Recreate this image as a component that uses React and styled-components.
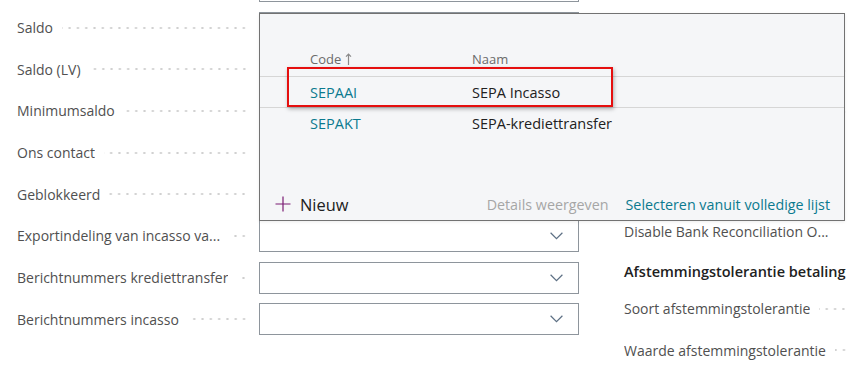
import React from 'react';
import styled, { createGlobalStyle } from 'styled-components';

const GlobalStyle = createGlobalStyle`
  body {
    margin: 0;
    background: #ffffff;
    font-family: "Segoe UI", "Open Sans", "Noto Sans", sans-serif;
    color: #505050;
  }
`;

const leftFields = [
  { label: '' },
  { label: 'Saldo' },
  { label: 'Saldo (LV)' },
  { label: 'Minimumsaldo' },
  { label: 'Ons contact' },
  { label: 'Geblokkeerd' },
  { label: 'Exportindeling van incasso va...', select: true },
  { label: 'Berichtnummers krediettransfer', select: true },
  { label: 'Berichtnummers incasso', select: true },
];

// rows above "Disable..." sit under the lookup popup; only their leader tips show
const rightFields = [
  { h: 41.7, dots: false },
  { h: 41.7 },
  { h: 41.7 },
  { h: 38.7, dots: false },
  { h: 38.7, dots: false },
  { label: 'Disable Bank Reconciliation O...', h: 41.7, dots: false },
  { title: 'Afstemmingstolerantie betaling', h: 38 },
  { label: 'Soort afstemmingstolerantie', h: 37 },
  { label: 'Waarde afstemmingstolerantie', h: 46 },
];

const codes = [
  { code: 'SEPAAI', name: 'SEPA Incasso' },
  { code: 'SEPAKT', name: 'SEPA-krediettransfer' },
];

const Chevron = () => (
  <svg width="13" height="8" viewBox="0 0 13 8">
    <polyline points="0.6,0.8 6.5,6.6 12.4,0.8" fill="none" stroke="#5d7084" strokeWidth="1.2" />
  </svg>
);

const SortArrow = () => (
  <svg width="7" height="12" viewBox="0 0 7 12">
    <path d="M3.5 1 V12 M1 3.6 L3.5 1 L6 3.6" fill="none" stroke="#8a8a8a" strokeWidth="1.2" />
  </svg>
);

const PlusIcon = () => (
  <svg width="16" height="16" viewBox="0 0 16 16">
    <path d="M8 0.5 V15.5 M0.5 8 H15.5" stroke="#7b1b73" strokeWidth="1.2" />
  </svg>
);

const App = () => (
  <>
    <GlobalStyle />
    <Page>
      <Column $width={562} $shift={-35}>
        {leftFields.map((f, i) => (
          <FieldRow key={i} $h={41.7}>
            <LabelArea $width={231}>
              {f.label && <Label>{f.label}</Label>}
              {f.label && <Leader />}
            </LabelArea>
            <InputBox>{f.select && <Chevron />}</InputBox>
          </FieldRow>
        ))}
      </Column>

      <Column $width={240} $shift={8}>
        {rightFields.map((f, i) =>
          f.title ? (
            <GroupTitle key={i} $h={f.h}>{f.title}</GroupTitle>
          ) : (
            <FieldRow key={i} $h={f.h}>
              <LabelArea $width={224}>
                {f.label && <Label>{f.label}</Label>}
                {f.dots !== false && <Leader />}
              </LabelArea>
            </FieldRow>
          )
        )}
      </Column>

      <Popup>
        <Table>
          <HeadRow>
            <HeadCell $width={162}>
              Code <SortArrow />
            </HeadCell>
            <HeadCell>Naam</HeadCell>
          </HeadRow>
          {codes.map((c) => (
            <BodyRow key={c.code}>
              <CodeCell>{c.code}</CodeCell>
              <NameCell>{c.name}</NameCell>
            </BodyRow>
          ))}
        </Table>
        <Footer>
          <NewButton>
            <PlusIcon />
            Nieuw
          </NewButton>
          <FooterLinks>
            <FooterLink $muted>Details weergeven</FooterLink>
            <FooterLink>Selecteren vanuit volledige lijst</FooterLink>
          </FooterLinks>
        </Footer>
      </Popup>

      <Highlight />
    </Page>
  </>
);

const Page = styled.div`
  position: relative;
  width: 853px;
  height: 389px;
  overflow: hidden;
  display: flex;
  gap: 45px;
  padding-left: 17px;
  box-sizing: border-box;
`;

const Column = styled.div`
  flex: 0 0 ${(p) => p.$width}px;
  display: flex;
  flex-direction: column;
  margin-top: ${(p) => p.$shift}px;
`;

const FieldRow = styled.div`
  height: ${(p) => p.$h}px;
  flex: 0 0 auto;
  display: flex;
  align-items: center;
  gap: 11px;
`;

const LabelArea = styled.div`
  width: ${(p) => p.$width}px;
  flex: 0 0 auto;
  display: flex;
  align-items: center;
  overflow: hidden;
`;

const Label = styled.span`
  font-size: 14px;
  color: #505050;
  white-space: nowrap;
  flex: 0 1 auto;
  max-width: 218px;
  overflow: hidden;
  text-overflow: ellipsis;
`;

const Leader = styled.span`
  flex: 1 1 auto;
  min-width: 8px;
  height: 4px;
  margin-left: 9px;
  background-image: radial-gradient(circle, #cfcfcf 0.9px, transparent 1.3px);
  background-size: 8.3px 4px;
  background-repeat: repeat-x;
  background-position: right center;
`;

const InputBox = styled.div`
  width: 320px;
  height: 32px;
  box-sizing: border-box;
  border: 1px solid #8e959c;
  background: #ffffff;
  display: flex;
  align-items: center;
  justify-content: flex-end;
  padding-right: 15px;
`;

const GroupTitle = styled.div`
  height: ${(p) => p.$h}px;
  flex: 0 0 auto;
  display: flex;
  align-items: center;
  font-size: 14.5px;
  font-weight: 600;
  color: #212121;
  white-space: nowrap;
`;

const Popup = styled.div`
  position: absolute;
  left: 259px;
  top: 13px;
  width: 586px;
  height: 208px;
  box-sizing: border-box;
  border: 1px solid #727272;
  background: #f5f6f8;
  display: flex;
  flex-direction: column;
  justify-content: space-between;
  box-shadow: 0 1px 3px rgba(0, 0, 0, 0.08);
`;

const Table = styled.div`
  padding-top: 35px;
  display: flex;
  flex-direction: column;
`;

const HeadRow = styled.div`
  display: flex;
  align-items: flex-start;
  height: 27px;
  padding-left: 50px;
  border-bottom: 1px solid #d6d6d6;
`;

const HeadCell = styled.div`
  ${(p) => p.$width && `width: ${p.$width}px;`}
  display: flex;
  align-items: center;
  gap: 4px;
  font-size: 13px;
  color: #6b6b6b;
  line-height: 20px;
`;

const BodyRow = styled.div`
  display: flex;
  align-items: center;
  height: 30px;
  padding-left: 50px;
  border-bottom: 1px solid #d6d6d6;

  &:last-child {
    border-bottom: none;
  }
`;

const CodeCell = styled.div`
  width: 162px;
  font-size: 14.5px;
  color: #0b7a8f;
`;

const NameCell = styled.div`
  font-size: 14.5px;
  color: #212121;
`;

const Footer = styled.div`
  display: flex;
  align-items: center;
  justify-content: space-between;
  height: 32px;
  padding: 0 14px 0 15px;
`;

const NewButton = styled.div`
  display: flex;
  align-items: center;
  gap: 9px;
  font-size: 16.4px;
  color: #212121;
`;

const FooterLinks = styled.div`
  display: flex;
  align-items: center;
  gap: 17px;
`;

const FooterLink = styled.span`
  font-size: 14.3px;
  color: ${(p) => (p.$muted ? '#a6a6a6' : '#0b7a8f')};
`;

const Highlight = styled.div`
  position: absolute;
  left: 287px;
  top: 67px;
  width: 326px;
  height: 40px;
  box-sizing: border-box;
  border: 2px solid #e50f0f;
  box-shadow: 1px 2px 4px rgba(0, 0, 0, 0.3);
  pointer-events: none;
`;

export default App;
